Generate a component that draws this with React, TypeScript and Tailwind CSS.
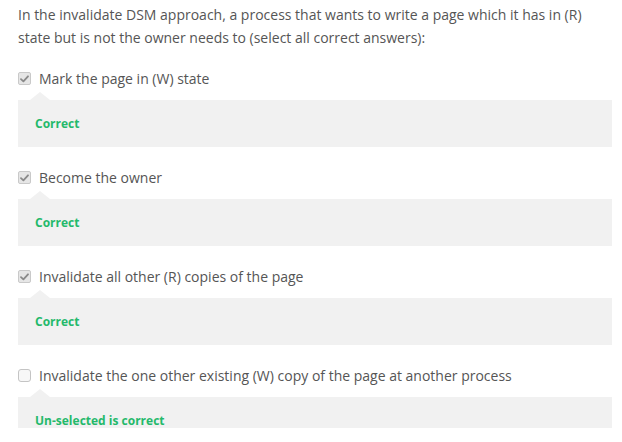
import React from "react";

const items = [
  { label: "Mark the page in (W) state", checked: true, feedback: "Correct" },
  { label: "Become the owner", checked: true, feedback: "Correct" },
  { label: "Invalidate all other (R) copies of the page", checked: true, feedback: "Correct" },
  { label: "Invalidate the one other existing (W) copy of the page at another process", checked: false, feedback: "Un-selected is correct" },
];

function Box({ checked }: { checked: boolean }) {
  return checked ? (
    <span className="flex h-[13px] w-[13px] shrink-0 items-center justify-center rounded-[2px] border border-[#c9c9c9] bg-[#e6e6e6]">
      <svg width="9" height="8" viewBox="0 0 9 8">
        <path d="M1 4.2 L3.4 6.4 L8 1.3" fill="none" stroke="#8a8a8a" strokeWidth="1.8" strokeLinecap="round" strokeLinejoin="round" />
      </svg>
    </span>
  ) : (
    <span className="block h-[13px] w-[13px] shrink-0 rounded-[3px] border border-[#c4c4c4] bg-[#f7f7f7]" />
  );
}

export default function App() {
  return (
    <div className="h-[428px] overflow-hidden bg-white" style={{ fontFamily: '"Open Sans", sans-serif' }}>
      <div className="pl-[18px] pr-[10px] pt-[3px]">
        <p className="text-[14px] leading-[23px] text-[#555]">
          In the invalidate DSM approach, a process that wants to write a page which it has in (R) state but is not the owner needs to (select all correct answers):
        </p>
        <div className="mt-[18px] flex flex-col gap-[19px]">
          {items.map((it) => (
            <div key={it.label} className="flex flex-col">
              <div className="flex h-[23px] items-center gap-[8px]">
                <Box checked={it.checked} />
                <span className="text-[14px] text-[#555]">{it.label}</span>
              </div>
              <div className="relative mt-[10px] flex h-[47px] items-center bg-[#f1f1f1] px-[17px]">
                <span className="absolute left-[12px] top-[-8px] h-0 w-0 border-x-[10px] border-b-[8px] border-x-transparent border-b-[#f1f1f1]" />
                <span className="text-[12px] font-bold text-[#24b96b]">{it.feedback}</span>
              </div>
            </div>
          ))}
        </div>
      </div>
    </div>
  );
}
